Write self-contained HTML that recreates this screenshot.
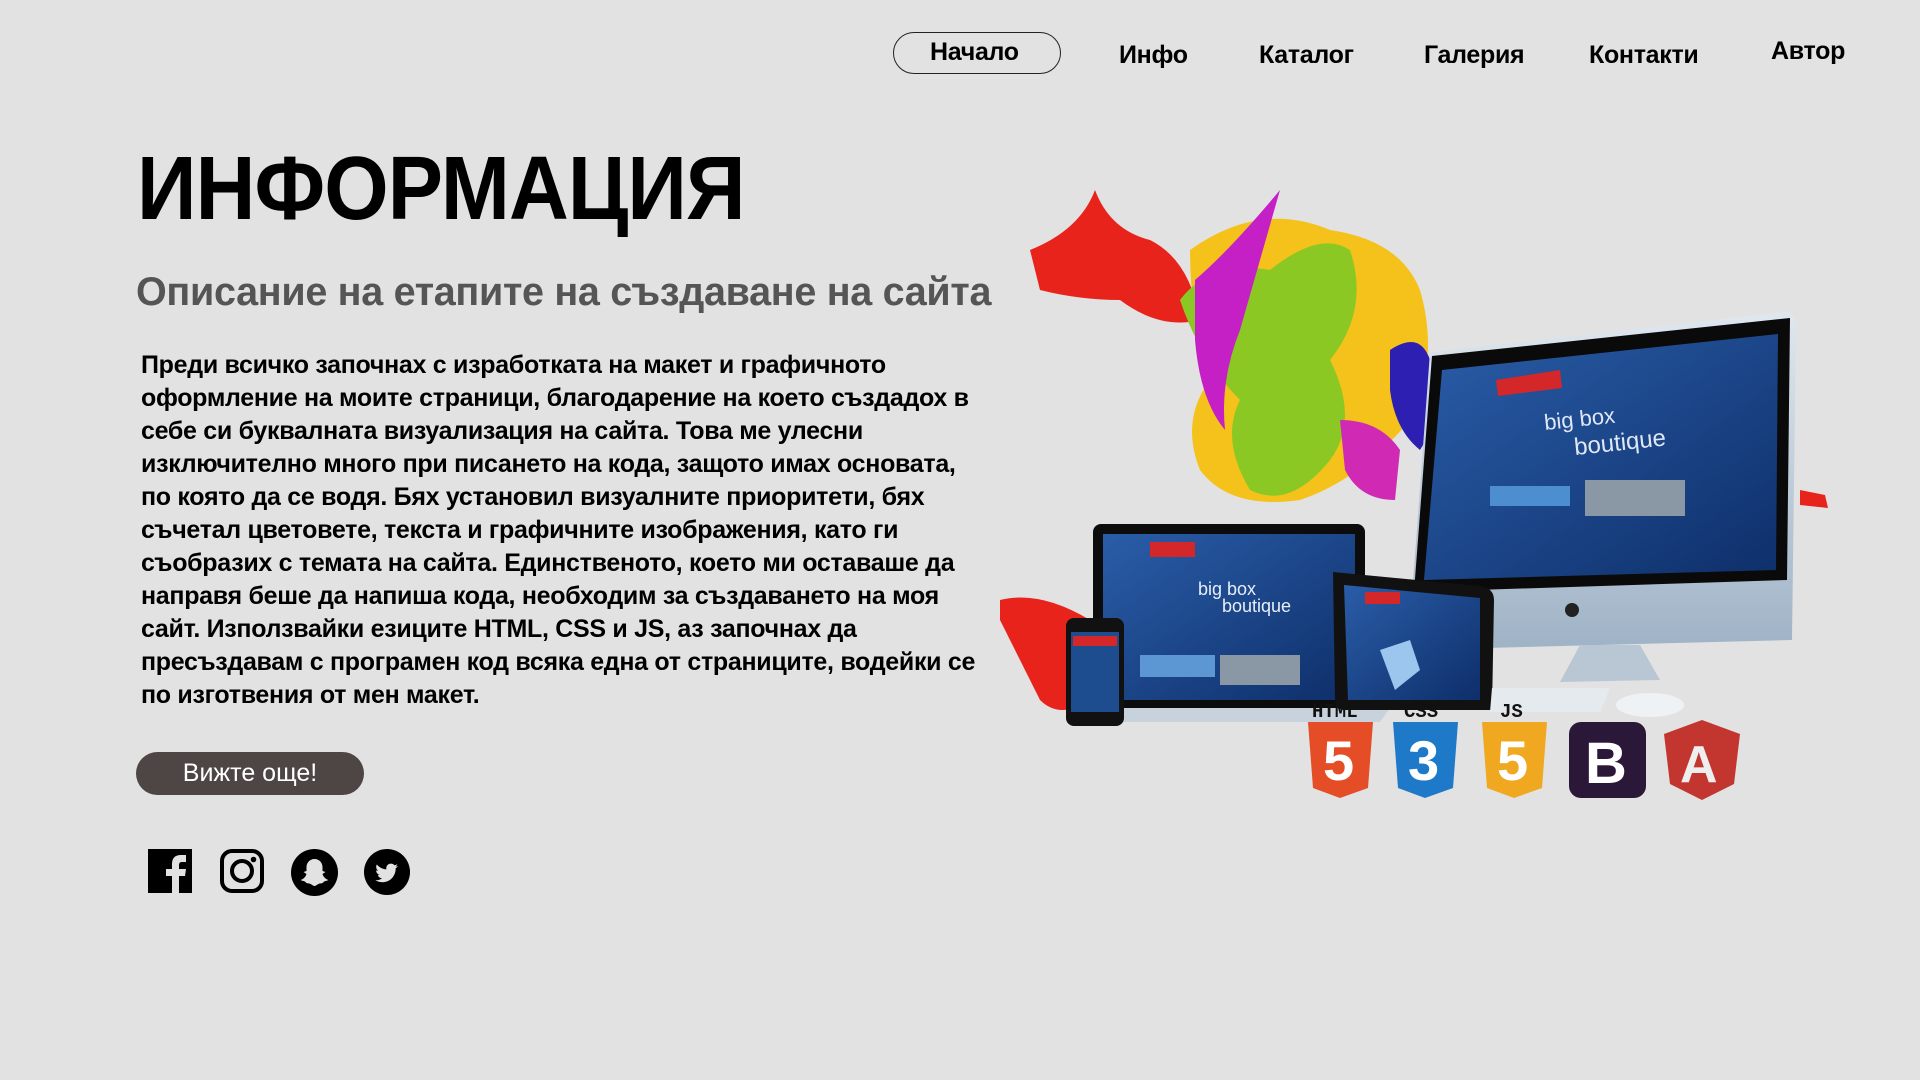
<!DOCTYPE html>
<html><head><meta charset="utf-8">
<style>
html,body{margin:0;padding:0;}
body{width:1920px;height:1080px;background:#e2e2e2;position:relative;overflow:hidden;font-family:"Liberation Sans",sans-serif;color:#000;}
.nav a{position:absolute;font-weight:bold;font-size:25px;color:#000;text-decoration:none;white-space:nowrap;letter-spacing:-0.3px}
.btn1{position:absolute;left:893px;top:32px;width:166px;height:40px;border:1.5px solid #222;border-radius:21px;}
h1{position:absolute;left:137px;top:138px;margin:0;font-size:90px;font-weight:bold;transform:scaleX(0.92);transform-origin:left top;white-space:nowrap;letter-spacing:-1px}
h2{position:absolute;left:136px;top:270px;margin:0;font-size:39.5px;font-weight:bold;color:#555;white-space:nowrap;letter-spacing:-0.3px}
p{position:absolute;left:141px;top:349px;margin:0;font-size:25px;font-weight:bold;line-height:33px;white-space:nowrap;letter-spacing:-0.3px}
.more{position:absolute;left:136px;top:752px;width:228px;height:43px;border-radius:22px;background:#4e4545;color:#fff;font-size:25px;text-align:center;line-height:42px}
.ic{position:absolute;top:849px}
</style></head><body>
<div class="nav">
<div class="btn1"></div>
<a style="left:930px;top:38px">Начало</a>
<a style="left:1119px;top:41px">Инфо</a>
<a style="left:1259px;top:41px">Каталог</a>
<a style="left:1424px;top:41px">Галерия</a>
<a style="left:1589px;top:41px">Контакти</a>
<a style="left:1771px;top:37px">Автор</a>
</div>
<h1>ИНФОРМАЦИЯ</h1>
<h2>Описание на етапите на създаване на сайта</h2>
<p>Преди всичко започнах с изработката на макет и графичното<br>оформление на моите страници, благодарение на което създадох в<br>себе си буквалната визуализация на сайта. Това ме улесни<br>изключително много при писането на кода, защото имах основата,<br>по която да се водя. Бях установил визуалните приоритети, бях<br>съчетал цветовете, текста и графичните изображения, като ги<br>съобразих с темата на сайта. Единственото, което ми оставаше да<br>направя беше да напиша кода, необходим за създаването на моя<br>сайт. Използвайки езиците HTML, CSS и JS, аз започнах да<br>пресъздавам с програмен код всяка една от страниците, водейки се<br>по изготвения от мен макет.</p>
<div class="more">Вижте още!</div>

<svg class="ic" style="left:148px" width="44" height="44" viewBox="0 0 44 44"><rect width="44" height="44" fill="#000"/><path d="M24 44V27h-6v-7h6v-5c0-6 3-9 9-9h5v7h-4c-2 0-3 1-3 3v4h7l-1 7h-6v17z" fill="#e2e2e2"/></svg>
<svg class="ic" style="left:220px" width="44" height="44" viewBox="0 0 44 44"><rect x="2" y="2" width="40" height="40" rx="10" fill="none" stroke="#000" stroke-width="4"/><circle cx="22" cy="22" r="10" fill="none" stroke="#000" stroke-width="4"/><circle cx="33.5" cy="10.5" r="2.8" fill="#000"/></svg>
<svg class="ic" style="left:291px" width="47" height="47" viewBox="0 0 47 47"><circle cx="23.5" cy="23.5" r="23.5" fill="#000"/><path d="M23.5 10c-5 0-8 4-8 8v4l-3 1 3 2c-1 3-3 5-6 6 2 1 4 1 5 2 1 2 4 1 5 2 2 1 3 2 4 2s2-1 4-2c1-1 4 0 5-2 1-1 3-1 5-2-3-1-5-3-6-6l3-2-3-1v-4c0-4-3-8-8-8z" fill="#e2e2e2"/></svg>
<svg class="ic" style="left:364px" width="46" height="46" viewBox="0 0 46 46"><circle cx="23" cy="23" r="23" fill="#000"/><g transform="translate(11.5 12.5) scale(0.95)"><path d="M23.6 4.6c-.9.4-1.8.6-2.8.8 1-.6 1.8-1.6 2.2-2.7-1 .6-2 1-3.1 1.2C19 2.9 17.7 2.3 16.2 2.3c-2.7 0-4.9 2.2-4.9 4.9 0 .4 0 .8.1 1.1C7.4 8.1 3.8 6.1 1.4 3.2c-.4.7-.7 1.6-.7 2.5 0 1.7.9 3.2 2.2 4.1-.8 0-1.6-.2-2.2-.6v.1c0 2.4 1.7 4.4 3.9 4.8-.4.1-.8.2-1.3.2-.3 0-.6 0-.9-.1.6 2 2.4 3.4 4.6 3.4-1.7 1.3-3.8 2.1-6.1 2.1-.4 0-.8 0-1.2-.1 2.2 1.4 4.8 2.2 7.5 2.2 9.1 0 14-7.5 14-14v-.6c1-.7 1.8-1.6 2.4-2.5z" fill="#e2e2e2"/></g></svg>

<svg style="position:absolute;left:0;top:0" width="1920" height="1080" viewBox="0 0 1920 1080">
<defs>
<linearGradient id="scr" x1="0" y1="0" x2="1" y2="1"><stop offset="0" stop-color="#2a5da8"/><stop offset="1" stop-color="#0e2f6a"/></linearGradient>
<linearGradient id="sil" x1="0" y1="0" x2="0" y2="1"><stop offset="0" stop-color="#dfe7ef"/><stop offset="1" stop-color="#9fb3c6"/></linearGradient>
</defs>
<path d="M1030 250 Q1080 230 1095 190 Q1110 230 1150 240 Q1190 260 1200 320 Q1160 330 1120 300 Q1080 300 1040 290 Z" fill="#e8231c"/>
<path d="M1190 250 Q1260 200 1330 230 Q1400 240 1420 290 Q1440 360 1410 420 Q1360 480 1300 500 Q1230 510 1200 470 Q1180 420 1210 380 Q1190 320 1190 250Z" fill="#f4c21a"/>
<path d="M1180 300 Q1210 260 1270 270 Q1320 230 1350 250 Q1370 310 1330 360 Q1360 420 1330 460 Q1290 510 1250 490 Q1220 440 1240 400 Q1200 360 1180 300Z" fill="#8cc824"/>
<path d="M1195 280 Q1230 250 1280 190 Q1260 260 1240 330 Q1220 380 1225 430 Q1200 400 1195 340Z" fill="#c51fc6"/>
<path d="M1390 350 Q1420 330 1430 360 Q1440 420 1420 450 Q1395 430 1390 390Z" fill="#2e1fb3"/>
<path d="M1340 420 Q1380 420 1400 450 L1395 500 Q1360 500 1345 470Z" fill="#d02ab4"/>
<path d="M1000 600 Q1040 590 1090 620 L1090 700 Q1060 720 1040 700 Q1020 660 1000 620Z" fill="#e8231c"/>
<path d="M1800 490 L1825 495 L1828 508 L1800 505Z" fill="#e8231c"/>
<path d="M1430 352 L1785 312 Q1796 312 1796 325 L1792 640 L1408 650 Z" fill="url(#sil)"/>
<path d="M1432 356 L1790 318 L1787 580 L1414 592 Z" fill="#0a0a0a"/>
<path d="M1442 370 L1778 334 L1776 570 L1424 580 Z" fill="url(#scr)"/>
<path d="M1496 380 L1560 370 L1562 388 L1498 396Z" fill="#d3272a"/>
<text x="1545" y="430" fill="#dfe8f5" font-family="Liberation Sans" font-size="22" transform="rotate(-6 1545 430)">big box</text>
<text x="1575" y="455" fill="#dfe8f5" font-family="Liberation Sans" font-size="24" transform="rotate(-6 1575 455)">boutique</text>
<rect x="1490" y="486" width="80" height="20" fill="#4d8ed0"/><rect x="1585" y="480" width="100" height="36" fill="#8a97a4"/>
<circle cx="1572" cy="610" r="7" fill="#222"/>
<path d="M1580 645 L1640 645 L1660 680 L1560 682Z" fill="#b9c7d4"/>
<rect x="1093" y="524" width="272" height="184" rx="8" fill="#0c0c0c"/>
<rect x="1103" y="534" width="252" height="166" fill="url(#scr)"/>
<rect x="1150" y="542" width="45" height="15" fill="#d3272a"/>
<text x="1198" y="595" fill="#e8eef8" font-family="Liberation Sans" font-size="18">big box</text>
<text x="1222" y="612" fill="#e8eef8" font-family="Liberation Sans" font-size="18">boutique</text>
<rect x="1140" y="655" width="75" height="22" fill="#5d97d3"/><rect x="1220" y="655" width="80" height="30" fill="#8a97a4"/>
<path d="M1070 708 L1390 708 L1380 722 L1080 722Z" fill="#c8d2dc"/>
<path d="M1333 572 L1480 586 Q1494 588 1494 600 L1492 710 L1345 710 Q1335 710 1335 700 Z" fill="#111"/>
<path d="M1344 585 L1480 598 L1480 700 L1348 700 Z" fill="url(#scr)"/>
<rect x="1365" y="592" width="35" height="12" fill="#d3272a"/>
<path d="M1380 650 L1410 640 L1420 670 L1395 690Z" fill="#9cc6ee"/>
<path d="M1492 688 L1610 688 L1600 712 L1490 712Z" fill="#e5eaef"/>
<ellipse cx="1650" cy="705" rx="34" ry="12" fill="#eef2f5"/>
<rect x="1066" y="618" width="58" height="108" rx="8" fill="#111"/>
<rect x="1071" y="632" width="48" height="80" fill="#1d4c8f"/>
<rect x="1073" y="636" width="44" height="10" fill="#d3272a"/>
<g font-family="Liberation Mono" font-weight="bold" font-size="19" fill="#111">
<text x="1312" y="717">HTML</text><text x="1404" y="717">CSS</text><text x="1500" y="717">JS</text></g>
<path d="M1308 722 L1373 722 L1368 788 L1340 798 L1313 788Z" fill="#e44d26"/>
<text x="1323" y="780" font-family="Liberation Sans" font-weight="bold" font-size="56" fill="#fff">5</text>
<path d="M1393 722 L1458 722 L1453 788 L1425 798 L1398 788Z" fill="#1f79c9"/>
<text x="1408" y="780" font-family="Liberation Sans" font-weight="bold" font-size="56" fill="#fff">3</text>
<path d="M1482 722 L1547 722 L1542 788 L1514 798 L1487 788Z" fill="#f0a821"/>
<text x="1497" y="780" font-family="Liberation Sans" font-weight="bold" font-size="56" fill="#fff">5</text>
<rect x="1569" y="722" width="77" height="76" rx="12" fill="#2b1737"/>
<text x="1585" y="783" font-family="Liberation Sans" font-weight="bold" font-size="58" fill="#fff">B</text>
<path d="M1702 720 L1740 734 L1734 784 L1702 800 L1670 784 L1664 734Z" fill="#c3352f"/>
<text x="1680" y="782" font-family="Liberation Sans" font-weight="bold" font-size="52" fill="#eee">A</text>
</svg>
</body></html>
